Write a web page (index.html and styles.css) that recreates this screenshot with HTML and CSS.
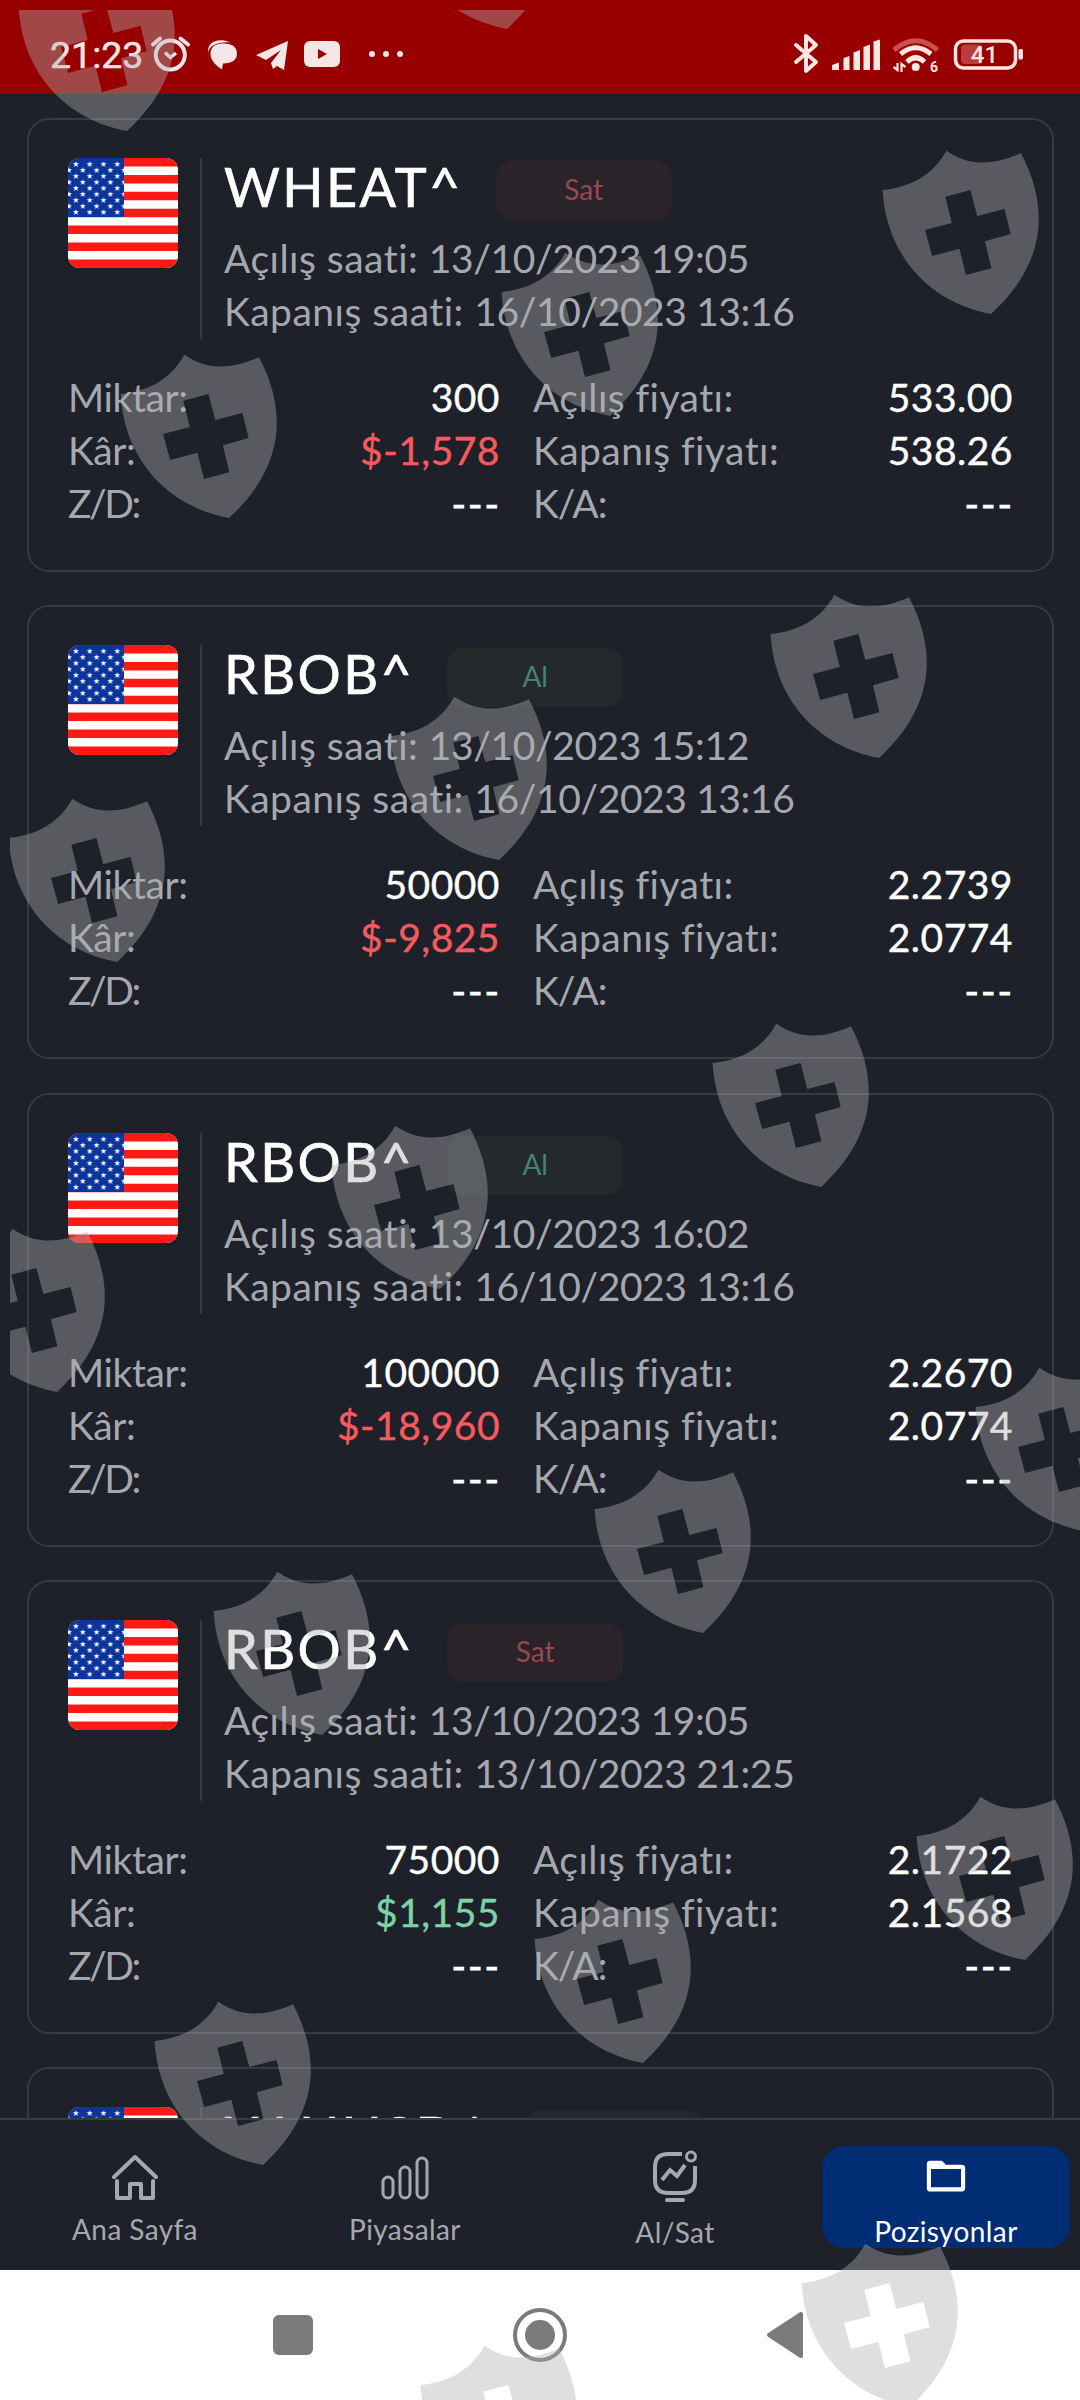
FILE: index.html
```
<!DOCTYPE html>
<html lang="tr">
<head>
    <meta charset="UTF-8">
    <meta name="viewport" content="width=device-width, initial-scale=1">
    <title>Pozisyonlar</title>
    <link rel="stylesheet" href="styles.css">
</head>

<body>
    <svg class="defs" width="0" height="0">
        <defs>
            <path id="star" fill="#fff" d="M0 -3.1L.8 -1H3L1.2 .4L1.9 2.6L0 1.3L-1.9 2.6L-1.2 .4L-3 -1H-.8Z"/>
            <pattern id="stars" width="13.8" height="12" patternUnits="userSpaceOnUse">
                <use href="#star" x="7.9" y="6.3"/>
                <use href="#star" x="1" y="12.3"/>
                <use href="#star" x="14.8" y="12.3"/>
                <use href="#star" x="1" y=".3"/>
                <use href="#star" x="14.8" y=".3"/>
            </pattern>
            <symbol id="flag" viewBox="0 0 110 110">
                <rect width="110" height="110" fill="#fff"/>
                <path d="M0 4.25H110M0 21.15H110M0 38.05H110M0 54.95H110M0 71.85H110M0 88.75H110M0 105.65H110" stroke="#fd1a14" stroke-width="8.5"/>
                <rect width="56" height="59" fill="#0b359b"/>
                <rect y="3" width="56" height="54" fill="url(#stars)"/>
            </symbol>
            <symbol id="shield" viewBox="0 0 160 165">
                <path fill-rule="evenodd" d="M.6 40C29 37 51 25 64.3 .7C87 16 110 16 139 3.3C163 49 171 107 109 164C45 152 4 103 .6 40ZM63.3 46.7L88.4 40L95.3 66L122.5 59L128.7 84L102.9 91.3L109.4 118.3L84 125L77.4 98.7L50.2 106L43 80L69.8 73Z"/>
            </symbol>
        </defs>
    </svg>

    <div class="status-bar">
        <span class="time">21:23</span>
        <svg class="status-left" width="270" height="50" viewBox="0 0 270 50">
            <g fill="none" stroke="#f5e5e5" stroke-width="4">
                <circle cx="21.3" cy="26" r="14.5"/>
                <path d="M4 15.5L11 9.5M31.5 9.5L39 15.5" stroke-linecap="round"/>
                <path d="M16 23.5L21.3 28.5L27 24" stroke-width="3.5"/>
            </g>
            <g fill="#f5e5e5">
                <path d="M59 24C58 15 65 10 75 11.5L82 13.5C68 12.5 60 17 59 24Z"/>
                <path d="M61.5 25C61.5 17 67 14.5 75 14.5C83 14.5 88 18 88 24.5C88 31 83 34.5 74 34.5L73 40.5C66 36 61.5 31 61.5 25Z"/>
                <path d="M107 26L139 12L135 41L128 37L124 40L122 34L132 21L117 31Z"/>
                <rect x="155" y="12" width="36" height="26" rx="6"/>
                <circle cx="223" cy="25" r="3"/>
                <circle cx="237" cy="25" r="3"/>
                <circle cx="251" cy="25" r="3"/>
            </g>
            <path d="M169 20L178 25L169 30Z" fill="#980000"/>
        </svg>
        <svg class="status-right" width="254" height="50" viewBox="0 0 254 50">
            <g fill="none" stroke="#ffe6e0">
                <path d="M6 16L26 33L16 42V7L26 16L6 33" stroke-width="4" stroke-linejoin="round" stroke-linecap="round"/>
                <path d="M110.5 25Q125.7 12.5 141 25" stroke-width="5"/>
                <path d="M117 33Q125.7 24.5 134.5 33" stroke-width="5"/>
                <path d="M104 21Q125.7 2.5 147.5 21" stroke-width="5" stroke="#c9504e"/>
                <rect x="165.5" y="12" width="60" height="27" rx="8" stroke-width="3.5"/>
                <path d="M107.5 34V41L103.5 38M111.5 43V35L115.5 38" stroke-width="2.2"/>
            </g>
            <rect x="171" y="15.5" width="21" height="19.5" rx="4" fill="#bb3c3c"/>
            <g fill="#ffe6e0">
                <path d="M42 41V36L49 33.5V41ZM53.5 41V29L59.5 27V41ZM63.5 41V23.5L70 21V41ZM73.5 41V18L80 15.5V41ZM83.5 41V12.5L90 10.5V41Z"/>
                <circle cx="125.7" cy="38" r="4"/>
                <rect x="228.5" y="20" width="4.5" height="10.5" rx="1.5"/>
                <text class="wifi-gen" x="140" y="43">6</text>
                <text class="battery-level" x="194.5" y="34" text-anchor="middle">41</text>
            </g>
        </svg>
    </div>

    <main class="positions" id="positions"></main>

    <nav class="tabs">
        <a class="tab">
            <svg width="50" height="50" viewBox="0 0 50 50" fill="none" stroke="#a6a8b0" stroke-width="4" stroke-linecap="round" stroke-linejoin="round">
                <path d="M4 24L25 4L46 24M7 28V45H20V31H31V45H43V28"/>
            </svg>
            <span>Ana Sayfa</span>
        </a>
        <a class="tab">
            <svg width="50" height="50" viewBox="0 0 50 50" fill="none" stroke="#a6a8b0" stroke-width="3">
                <rect x="3" y="24" width="10" height="21" rx="5"/>
                <rect x="20" y="14" width="10" height="31" rx="5"/>
                <rect x="37" y="5" width="10" height="40" rx="5"/>
            </svg>
            <span>Piyasalar</span>
        </a>
        <a class="tab tab-trade">
            <svg width="50" height="54" viewBox="0 0 50 54" fill="none" stroke="#a6a8b0" stroke-width="4">
                <path d="M32 4H18Q5 4 5 17V30Q5 43 18 43H32Q45 43 45 30V16M12 30L20 20L27 26L35 15"/>
                <path d="M17 50H33" stroke-linecap="round"/>
                <circle cx="41" cy="6.5" r="4.5" stroke-width="3"/>
            </svg>
            <span>Al/Sat</span>
        </a>
        <a class="tab active">
            <svg width="50" height="42" viewBox="0 0 50 42">
                <path fill="#fff" fill-rule="evenodd" d="M6 2H20L25 7H43Q48 7 48 11V35Q48 39 43 39H6Q2 39 2 35V6Q2 2 6 2ZM7 12V34H43V12Z"/>
            </svg>
            <span>Pozisyonlar</span>
        </a>
    </nav>

    <footer class="system-nav">
        <svg width="600" height="60" viewBox="0 0 600 60" fill="#7b7b7b">
            <rect x="33" y="10" width="40" height="40" rx="6"/>
            <circle cx="300" cy="30" r="25" fill="none" stroke="#7b7b7b" stroke-width="4"/>
            <circle cx="300" cy="30" r="15"/>
            <path d="M529 30L561 9V51Z" stroke="#7b7b7b" stroke-width="4" stroke-linejoin="round"/>
        </svg>
    </footer>

    <div class="watermark" id="watermark"></div>

    <script src="script.js"></script>
</body>
</html>
```
FILE: styles.css
```
body {
    margin: 0;
    height: 2400px;
    display: flex;
    flex-direction: column;
    position: relative;
    overflow: hidden;
    background: #1e2129;
    color: #fff;
    font-family: Lato, sans-serif;
    font-variant-ligatures: none;
}

.defs {
    position: absolute;
}

.status-bar {
    height: 94px;
    flex: none;
    display: flex;
    align-items: center;
    padding: 14px 36px 0 50px;
    box-sizing: border-box;
    background: #980000;
}

.time {
    width: 99px;
    padding-top: 2px;
    color: #f5e5e5;
    font: 400 37.5px/50px Roboto, sans-serif;
    -webkit-text-stroke: 0.5px #f5e5e5;
}

.status-right {
    margin-left: auto;
}

.battery-level {
    font: 500 24px Roboto, sans-serif;
}

.wifi-gen {
    font: 700 14px Roboto, sans-serif;
}

.positions {
    height: 2024px;
    flex: none;
    padding: 24px 26px 0 27px;
    box-sizing: border-box;
    overflow: hidden;
}

.card {
    height: 454px;
    margin-bottom: 33.25px;
    padding: 38px 38px 0 39px;
    box-sizing: border-box;
    border: 2px solid #373a42;
    border-radius: 22px;
}

.card-head {
    display: flex;
    height: 181px;
}

.flag {
    width: 110px;
    height: 110px;
    border-radius: 12px;
}

.info {
    margin-left: 22px;
    padding-left: 22px;
    border-left: 2px solid #373a42;
}

.title {
    display: flex;
    align-items: center;
    height: 65px;
}

.symbol {
    padding-bottom: 7px;
    font-size: 54px;
    line-height: 58px;
    letter-spacing: 2.4px;
    -webkit-text-stroke: 0.7px #fff;
}

.badge {
    width: 176px;
    height: 59px;
    margin-left: 33px;
    border-radius: 16px;
    text-align: center;
    font-size: 28px;
    line-height: 57px;
}

.badge.sell {
    background: #2a2329;
    color: #984850;
}

.badge.buy {
    background: #24292c;
    color: #47826f;
}

.badge.none {
    background: #24272f;
}

.time-row {
    color: #a6a8b0;
    font-size: 39px;
    line-height: 53px;
    letter-spacing: 0.5px;
}

.time-row:nth-child(2) {
    margin-top: 9px;
}

.date {
    letter-spacing: -0.4px;
}

.details {
    display: grid;
    grid-template-columns: 432px 480px;
    column-gap: 33px;
    margin-top: 32px;
    font-size: 39px;
    line-height: 53px;
}

.cell {
    display: flex;
    justify-content: space-between;
}

.label {
    color: #a6a8b0;
    letter-spacing: -0.4px;
}

.cell:nth-child(even) .label {
    letter-spacing: 0.45px;
}

.cell .label.short {
    letter-spacing: -2.4px;
}

.cell:nth-child(even) .label.short {
    letter-spacing: -1px;
}

.value {
    letter-spacing: 0.5px;
    -webkit-text-stroke: 0.4px currentColor;
}

.value.empty {
    letter-spacing: 2px;
    margin-right: -1px;
    -webkit-text-stroke: 0.8px currentColor;
}

.value.loss {
    color: #f65a5e;
}

.value.gain {
    color: #7cd3a6;
}

.tabs {
    height: 152px;
    flex: none;
    display: grid;
    grid-template-columns: repeat(4, 1fr);
    box-sizing: border-box;
    border-top: 2px solid #373a42;
}

.tab {
    display: flex;
    flex-direction: column;
    align-items: center;
    padding-top: 33px;
    color: #a6a8b0;
    font-size: 28px;
    line-height: 34px;
    letter-spacing: 0.4px;
}

.tab span {
    margin-top: 9px;
}

.tab-trade {
    padding-top: 30px;
}

.tab-trade span {
    margin-top: 11px;
}

.tab.active {
    height: 102px;
    margin: 26px 10px 0 12px;
    padding-top: 13px;
    box-sizing: border-box;
    border-radius: 22px;
    background: #002d74;
    color: #fff;
}

.tab.active span {
    margin-top: 20px;
}

.system-nav {
    flex: 1;
    display: flex;
    align-items: center;
    justify-content: center;
    background: #fff;
}

.watermark {
    position: absolute;
    inset: 10px 0 0 10px;
    overflow: hidden;
}

.shield {
    position: absolute;
    width: 160px;
    height: 165px;
    fill: rgba(176, 176, 176, 0.405);
}
```
FILE: script.js
```
const positions = [
    { symbol: "WHEAT^", side: "sell", opened: "13/10/2023 19:05", closed: "16/10/2023 13:16", amount: "300", profit: "$-1,578", open: "533.00", close: "538.26" },
    { symbol: "RBOB^", side: "buy", opened: "13/10/2023 15:12", closed: "16/10/2023 13:16", amount: "50000", profit: "$-9,825", open: "2.2739", close: "2.0774" },
    { symbol: "RBOB^", side: "buy", opened: "13/10/2023 16:02", closed: "16/10/2023 13:16", amount: "100000", profit: "$-18,960", open: "2.2670", close: "2.0774" },
    { symbol: "RBOB^", side: "sell", opened: "13/10/2023 19:05", closed: "13/10/2023 21:25", amount: "75000", profit: "$1,155", open: "2.1722", close: "2.1568" },
    { symbol: "XAUUSD^", side: "none" }
];

const sideText = { sell: "Sat", buy: "Al", none: "" };

function cell(label, value, cls = "") {
    const size = label.includes("/") ? "short" : "";
    return `<div class="cell"><span class="label ${size}">${label}</span><span class="value ${cls}">${value}</span></div>`;
}

document.getElementById("positions").innerHTML = positions.map(p => `
    <div class="card">
        <div class="card-head">
            <svg class="flag"><use href="#flag"/></svg>
            <div class="info">
                <div class="title"><span class="symbol">${p.symbol}</span><span class="badge ${p.side}">${sideText[p.side]}</span></div>
                ${p.opened ? `<div class="time-row">Açılış saati: <span class="date">${p.opened}</span></div>
                <div class="time-row">Kapanış saati: <span class="date">${p.closed}</span></div>` : ""}
            </div>
        </div>
        ${p.amount ? `<div class="details">
            ${cell("Miktar:", p.amount)}
            ${cell("Açılış fiyatı:", p.open)}
            ${cell("Kâr:", p.profit, p.profit.includes("-") ? "loss" : "gain")}
            ${cell("Kapanış fiyatı:", p.close)}
            ${cell("Z/D:", "---", "empty")}
            ${cell("K/A:", "---", "empty")}
        </div>` : ""}
    </div>`).join("");

const shields = [
    [18, -33], [398, -135], [882, 150], [501, 252], [120, 354],
    [770, 594], [390, 696], [8, 798], [712, 1023], [331, 1125], [-52, 1228],
    [975, 1367], [594, 1469], [213, 1571], [916, 1796], [534, 1899], [154, 2001],
    [801, 2243], [420, 2345]
];

document.getElementById("watermark").innerHTML = shields.map(([x, y]) =>
    `<svg class="shield" style="left:${x - 10}px;top:${y - 10}px"><use href="#shield"/></svg>`).join("");
```
